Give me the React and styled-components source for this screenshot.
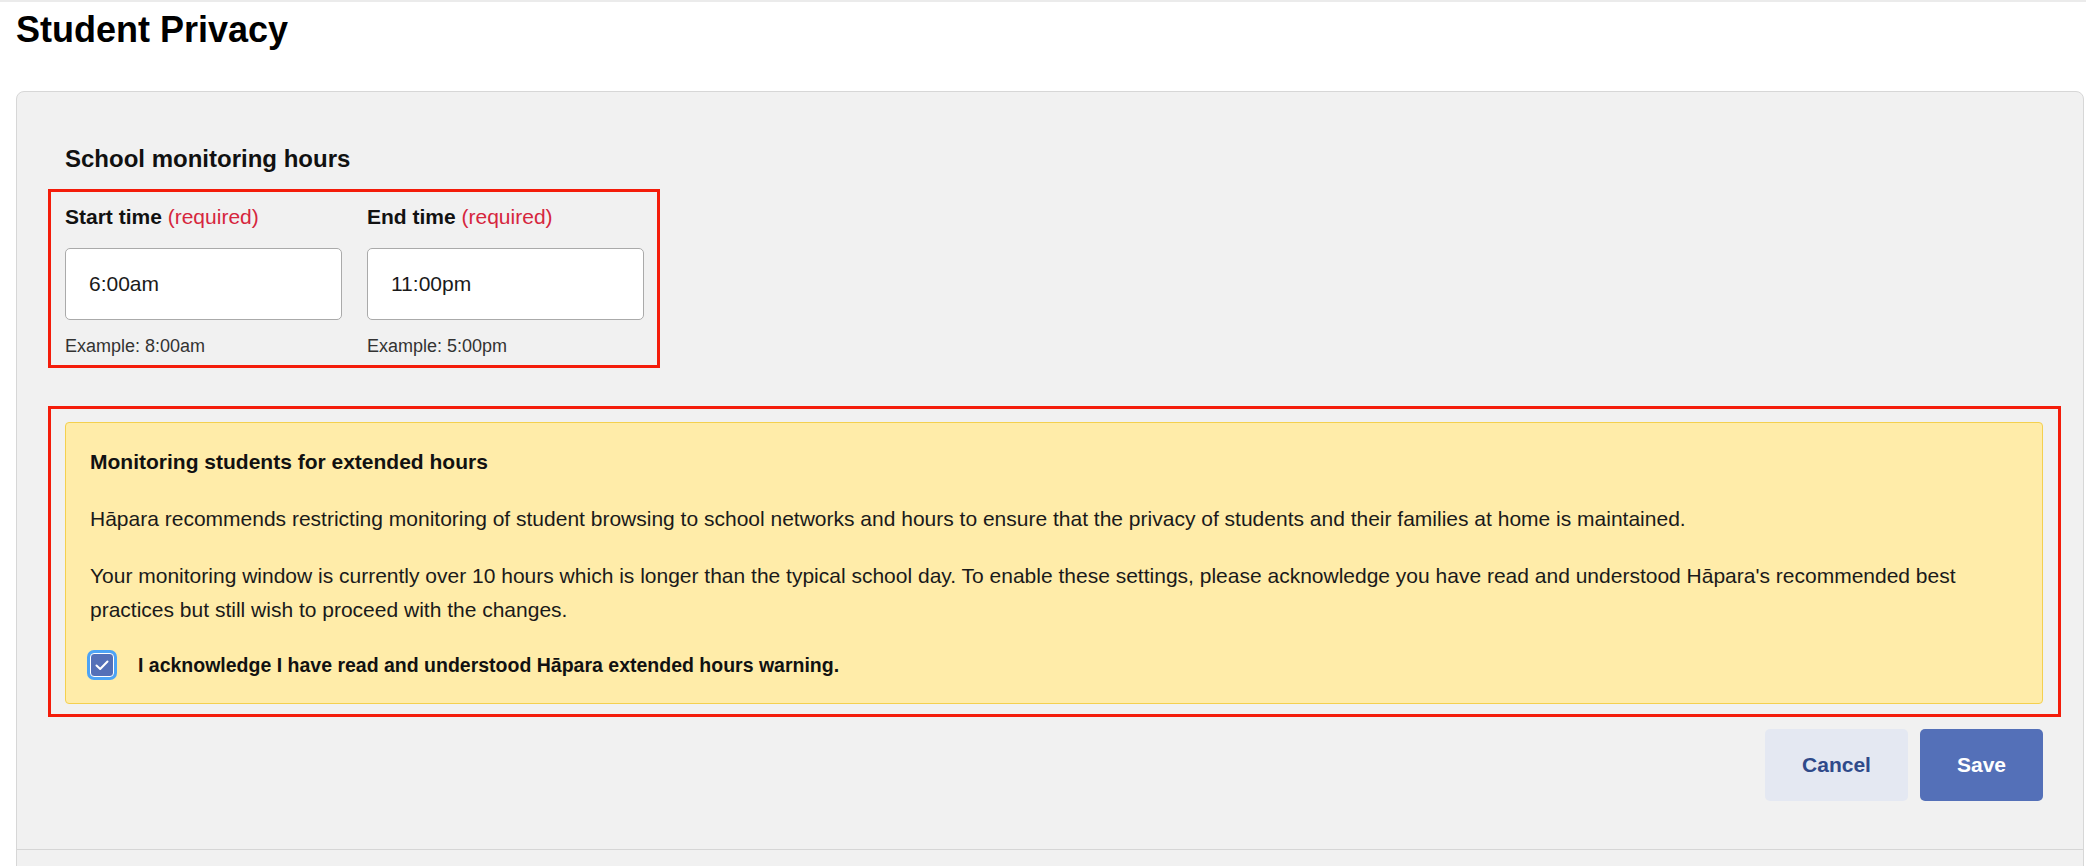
import React from 'react';
import styled, { createGlobalStyle } from 'styled-components';

const GlobalStyle = createGlobalStyle`
  html, body {
    margin: 0;
    padding: 0;
    background: #ffffff;
  }
  body {
    font-family: "Liberation Sans", Arial, Helvetica, sans-serif;
    color: #1a1a1a;
    overflow: hidden;
  }
`;

const Page = styled.div`
  border-top: 2px solid #ebebeb;
  padding: 7px 2px 0 16px;
  min-height: 866px;
  box-sizing: border-box;
`;

const Title = styled.h1`
  margin: 0;
  font-size: 36px;
  line-height: 42px;
  font-weight: 700;
  color: #000;
`;

const Card = styled.div`
  margin-top: 40px;
  background: #f1f1f1;
  border: 1px solid #d7d7d7;
  border-radius: 8px;
`;

const CardBody = styled.div`
  padding: 53px 22px 48px 31px;
`;

const CardFooter = styled.div`
  border-top: 1px solid #d6d6d6;
  height: 40px;
`;

const SectionTitle = styled.h2`
  margin: 0 0 16px 17px;
  font-size: 24px;
  line-height: 28px;
  font-weight: 700;
  color: #111;
`;

const Outline = styled.div`
  border: 3px solid #f41c0a;
  box-sizing: border-box;
  width: ${p => (p.$fit ? 'fit-content' : 'auto')};
  padding: ${p => p.$pad};
  margin-top: ${p => p.$top || 0}px;
`;

const FieldRow = styled.div`
  display: flex;
  gap: 25px;
`;

const Field = styled.div`
  display: flex;
  flex-direction: column;
  width: 277px;
`;

const Label = styled.label`
  font-size: 21px;
  line-height: 24px;
  font-weight: 700;
  color: #111;
  margin-bottom: 19px;
`;

const Required = styled.span`
  font-weight: 400;
  color: #d6263d;
`;

const TimeInput = styled.input`
  box-sizing: border-box;
  width: 277px;
  height: 72px;
  border: 1px solid #aaaaaa;
  border-radius: 5px;
  background: #fff;
  padding: 0 0 0 23px;
  font-family: inherit;
  font-size: 21px;
  color: #1a1a1a;
  outline: none;
`;

const Hint = styled.div`
  margin-top: 15px;
  font-size: 18px;
  line-height: 22px;
  color: #333;
`;

const Warning = styled.div`
  background: #ffeca9;
  border: 1px solid #f4d04f;
  border-radius: 4px;
  padding: 26px 24px 24px 24px;
`;

const WarningTitle = styled.h3`
  margin: 0 0 28px;
  font-size: 21px;
  line-height: 25px;
  font-weight: 700;
  color: #111;
`;

const Para = styled.p`
  margin: 0 0 23px;
  font-size: 21px;
  line-height: 34px;
  color: #1a1a1a;
`;

const CheckRow = styled.label`
  display: flex;
  align-items: center;
  gap: 24px;
  margin-top: 1px;
  padding-top: 3px;
  padding-bottom: 2px;
`;

const CheckBox = styled.span`
  box-sizing: border-box;
  width: 24px;
  height: 24px;
  flex: none;
  border-radius: 4px;
  background: #5470b8;
  border: 1px solid #ffffff;
  box-shadow: 0 0 0 3px #4da3f5;
  display: flex;
  align-items: center;
  justify-content: center;
`;

const CheckText = styled.span`
  font-size: 19.5px;
  line-height: 24px;
  font-weight: 700;
  color: #111;
`;

const Actions = styled.div`
  display: flex;
  justify-content: flex-end;
  gap: 12px;
  margin-top: 12px;
  padding-right: 18px;
`;

const Button = styled.button`
  height: 72px;
  padding: 0 37px;
  border: none;
  border-radius: 5px;
  font-family: inherit;
  font-size: 21px;
  font-weight: 700;
  cursor: pointer;
  background: ${p => (p.$primary ? '#5470b8' : '#e4e8f2')};
  color: ${p => (p.$primary ? '#ffffff' : '#2f4a8a')};
`;

const App = () => (
  <>
    <GlobalStyle />
    <Page>
      <Title>Student Privacy</Title>
      <Card>
        <CardBody>
          <SectionTitle>School monitoring hours</SectionTitle>
          <Outline $fit $pad="13px 13px 8px 14px">
            <FieldRow>
              <Field>
                <Label>
                  Start time <Required>(required)</Required>
                </Label>
                <TimeInput defaultValue="6:00am" />
                <Hint>Example: 8:00am</Hint>
              </Field>
              <Field>
                <Label>
                  End time <Required>(required)</Required>
                </Label>
                <TimeInput defaultValue="11:00pm" />
                <Hint>Example: 5:00pm</Hint>
              </Field>
            </FieldRow>
          </Outline>
          <Outline $top={38} $pad="13px 15px 10px 14px">
            <Warning>
              <WarningTitle>Monitoring students for extended hours</WarningTitle>
              <Para>
                Hāpara recommends restricting monitoring of student browsing to school networks and hours
                to ensure that the privacy of students and their families at home is maintained.
              </Para>
              <Para>
                Your monitoring window is currently over 10 hours which is longer than the typical school
                day. To enable these settings, please acknowledge you have read and understood Hāpara's
                recommended best practices but still wish to proceed with the changes.
              </Para>
              <CheckRow>
                <CheckBox>
                  <svg width="14" height="11" viewBox="0 0 14 11" fill="none">
                    <path d="M1.5 5.5 L5.2 9 L12.5 1.5" stroke="#fff" strokeWidth="2" strokeLinecap="round" strokeLinejoin="round" />
                  </svg>
                </CheckBox>
                <CheckText>I acknowledge I have read and understood Hāpara extended hours warning.</CheckText>
              </CheckRow>
            </Warning>
          </Outline>
          <Actions>
            <Button>Cancel</Button>
            <Button $primary>Save</Button>
          </Actions>
        </CardBody>
        <CardFooter />
      </Card>
    </Page>
  </>
);

export default App;
